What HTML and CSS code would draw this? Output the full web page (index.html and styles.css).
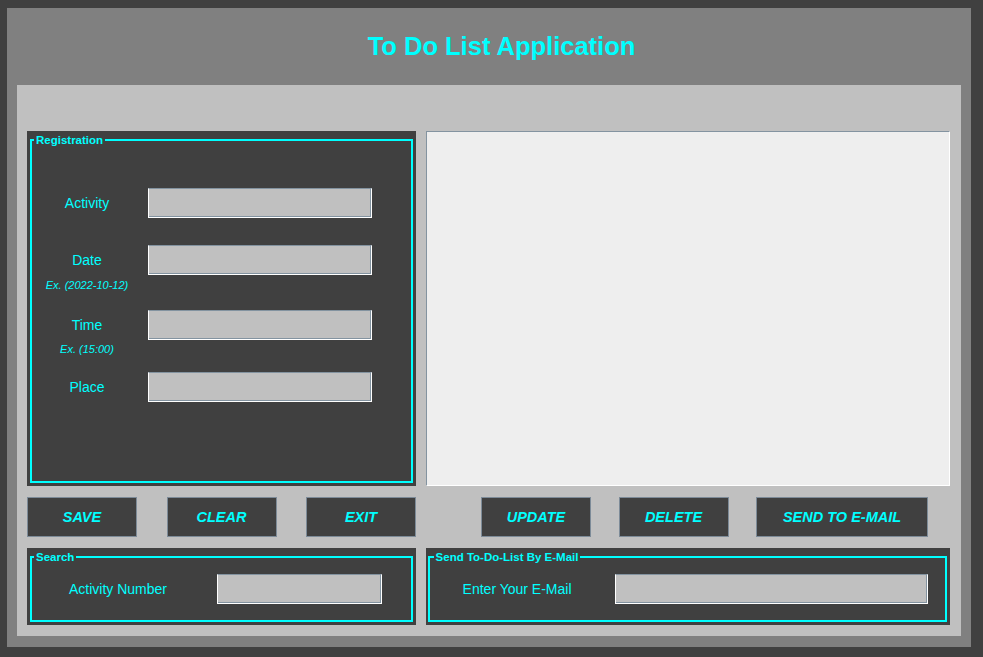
FILE: index.html
```html
<!DOCTYPE html>
<html lang="en">
<head>
<meta charset="utf-8">
<title>To Do List Application</title>
<link rel="stylesheet" href="styles.css">
</head>
<body>
<div class="window">
  <header class="titlebar">
    <h1 class="title">To Do List Application</h1>
  </header>
  <main class="panel">
    <div class="row row-top">
      <div class="frame frame-reg">
        <fieldset class="group">
          <legend class="legend">Registration</legend>
          <div class="fields">
            <div class="field f1">
              <div class="line"><label class="lbl">Activity</label><input class="entry" type="text"></div>
            </div>
            <div class="field f2">
              <div class="line"><label class="lbl">Date</label><input class="entry" type="text"></div>
              <div class="hint">Ex. (2022-10-12)</div>
            </div>
            <div class="field f3">
              <div class="line"><label class="lbl">Time</label><input class="entry" type="text"></div>
              <div class="hint h3">Ex. (15:00)</div>
            </div>
            <div class="field f4">
              <div class="line"><label class="lbl">Place</label><input class="entry" type="text"></div>
            </div>
          </div>
        </fieldset>
      </div>
      <div class="listbox"></div>
    </div>
    <div class="row row-buttons">
      <div class="btn-group btn-left">
        <button class="btn">SAVE</button>
        <button class="btn">CLEAR</button>
        <button class="btn">EXIT</button>
      </div>
      <div class="btn-group btn-right">
        <button class="btn">UPDATE</button>
        <button class="btn">DELETE</button>
        <button class="btn btn-wide">SEND TO E-MAIL</button>
      </div>
    </div>
    <div class="row row-bottom">
      <div class="frame frame-search">
        <fieldset class="group">
          <legend class="legend">Search</legend>
          <div class="inline search-line">
            <label class="lbl-inline lbl-search">Activity Number</label>
            <input class="entry entry-search" type="text">
          </div>
        </fieldset>
      </div>
      <div class="frame frame-email">
        <fieldset class="group">
          <legend class="legend legend-email">Send To-Do-List By E-Mail</legend>
          <div class="inline email-line">
            <label class="lbl-inline lbl-email">Enter Your E-Mail</label>
            <input class="entry entry-email" type="text">
          </div>
        </fieldset>
      </div>
    </div>
  </main>
</div>
</body>
</html>
```

FILE: styles.css
```css
* { box-sizing: border-box; }

html, body {
  margin: 0;
  padding: 0;
  background: #404040;
}

body {
  font-family: "Liberation Sans", Arial, sans-serif;
  color: #00ffff;
  overflow: hidden;
}

.window {
  margin: 8px 0 0 7px;
  width: 964px;
  height: 639px;
  background: #808080;
  display: flex;
  flex-direction: column;
}

.titlebar {
  height: 77px;
  flex: none;
}

.title {
  margin: 0;
  padding-left: 25px;
  font-size: 25.5px;
  font-weight: bold;
  line-height: 77px;
  text-align: center;
  color: #00ffff;
}

.panel {
  margin: 0 10px;
  height: 551px;
  background: #c0c0c0;
  padding: 46px 11px 0 10px;
}

.row {
  display: flex;
}

.row-top {
  gap: 10px;
  height: 355px;
}

.frame {
  background: #404040;
  display: flex;
  flex-direction: column;
}

.frame-reg {
  width: 389px;
  height: 355px;
  padding: 2px 3px 3px 3px;
}

.group {
  flex: 1;
  margin: 0;
  padding: 0;
  border: 2px solid #00ffff;
  min-width: 0;
}

.legend {
  margin-left: 2px;
  padding: 0 2px;
  font-size: 11.5px;
  font-weight: bold;
  line-height: 14px;
  color: #00ffff;
}

.fields {
  padding-top: 41px;
  display: flex;
  flex-direction: column;
}

.line {
  display: flex;
  align-items: center;
  height: 30px;
}

.lbl {
  width: 110px;
  margin-right: 6px;
  text-align: center;
  font-size: 14px;
  color: #00ffff;
}

.entry {
  display: block;
  width: 224px;
  height: 30px;
  margin: 0;
  padding: 0;
  background: #c0c0c0;
  border-top: 1px solid #8393a0;
  border-left: 1px solid #ffffff;
  border-right: 1px solid #ffffff;
  border-bottom: 1px solid #ffffff;
  box-shadow: inset -1px -1px 0 #8393a0;
  outline: none;
}

.hint {
  width: 110px;
  margin-top: 4px;
  text-align: center;
  font-size: 11px;
  font-style: italic;
  line-height: 12px;
  color: #00ffff;
}

.hint.h3 { margin-top: 3px; }

.f2 { margin-top: 27px; }
.f3 { margin-top: 19px; }
.f4 { margin-top: 17px; }

.listbox {
  width: 524px;
  height: 355px;
  background: #eeeeee;
  border-top: 1px solid #8393a0;
  border-left: 1px solid #8393a0;
  border-right: 1px solid #ffffff;
  border-bottom: 1px solid #ffffff;
}

.row-buttons {
  margin-top: 11px;
  height: 40px;
}

.btn-group {
  display: flex;
}

.btn-left {
  width: 389px;
  justify-content: space-between;
}

.btn-right {
  margin-left: 65px;
  gap: 27.5px;
}

.btn {
  width: 110px;
  height: 40px;
  margin: 0;
  padding: 0;
  background: #404040;
  border: 1px solid #7d8b98;
  color: #00ffff;
  font-family: "Liberation Sans", Arial, sans-serif;
  font-size: 14.5px;
  font-weight: bold;
  font-style: italic;
  text-align: center;
  cursor: pointer;
}

.btn-wide { width: 172px; }

.row-bottom {
  margin-top: 11px;
  gap: 10px;
  height: 77px;
}

.frame-search {
  width: 389px;
  height: 77px;
  padding: 2px 3px 3px 3px;
}

.frame-email {
  width: 525px;
  height: 77px;
  padding: 2px 3px 3px 2px;
}

.legend-email { margin-left: 4px; }

.inline {
  display: flex;
  align-items: center;
  padding-top: 10px;
}

.lbl-inline {
  font-size: 14px;
  color: #00ffff;
}

.lbl-search {
  margin-left: 37px;
  width: 148px;
}

.entry-search {
  width: 165px;
}

.lbl-email {
  margin-left: 33px;
  width: 152px;
}

.entry-email {
  width: 313px;
}
```
